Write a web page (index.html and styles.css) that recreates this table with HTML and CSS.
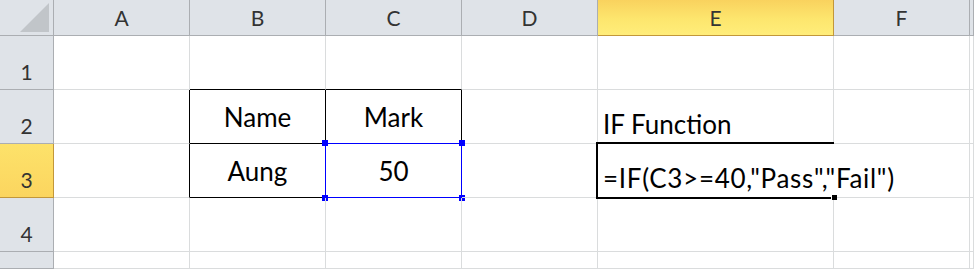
FILE: index.html
```html
<!DOCTYPE html>
<html lang="en">
<head>
<meta charset="utf-8">
<title>IF Function</title>
<link rel="stylesheet" href="styles.css">
</head>
<body>
<div class="sheet">
  <!-- column headers -->
  <div class="hd corner"><span class="corner-tri"></span></div>
  <div class="hd col">A</div>
  <div class="hd col">B</div>
  <div class="hd col">C</div>
  <div class="hd col">D</div>
  <div class="hd col active">E</div>
  <div class="hd col">F</div>
  <div class="hd col"></div>

  <!-- row 1 -->
  <div class="hd row">1</div>
  <div class="cell"></div>
  <div class="cell b-bottom"></div>
  <div class="cell b-bottom"></div>
  <div class="cell"></div>
  <div class="cell"></div>
  <div class="cell"></div>
  <div class="cell"></div>

  <!-- row 2 -->
  <div class="hd row">2</div>
  <div class="cell b-right"></div>
  <div class="cell center b-right b-bottom">Name</div>
  <div class="cell center b-right b-bottom">Mark</div>
  <div class="cell"></div>
  <div class="cell text">IF Function</div>
  <div class="cell"></div>
  <div class="cell"></div>

  <!-- row 3 -->
  <div class="hd row active">3</div>
  <div class="cell b-right"></div>
  <div class="cell center b-right b-bottom">Aung</div>
  <div class="cell center b-right b-bottom ref">50<span class="ref-box"><i class="h tl"></i><i class="h tr"></i><i class="h bl"></i><i class="h br"></i></span></div>
  <div class="cell"></div>
  <div class="cell text editing"><span class="formula">=IF(C3&gt;=40,"Pass","Fail")</span><span class="cursor-box"></span><span class="fill-handle"></span></div>
  <div class="cell"></div>
  <div class="cell"></div>

  <!-- row 4 -->
  <div class="hd row">4</div>
  <div class="cell"></div>
  <div class="cell"></div>
  <div class="cell"></div>
  <div class="cell"></div>
  <div class="cell"></div>
  <div class="cell"></div>
  <div class="cell"></div>

  <!-- row 5 -->
  <div class="hd row"></div>
  <div class="cell"></div>
  <div class="cell"></div>
  <div class="cell"></div>
  <div class="cell"></div>
  <div class="cell"></div>
  <div class="cell"></div>
  <div class="cell"></div>
</div>
</body>
</html>
```

FILE: styles.css
```css
html, body {
  margin: 0;
  padding: 0;
  background: #ffffff;
}

body {
  width: 974px;
  height: 269px;
  overflow: hidden;
  font-family: Lato, "Liberation Sans", sans-serif;
}

.sheet {
  display: grid;
  grid-template-columns: 54px 136px 136px 136px 136px 236px 136px 1fr;
  grid-template-rows: 36px 54px 54px 54px 54px 1fr;
  width: 974px;
  height: 269px;
}

/* headers */
.hd {
  box-sizing: border-box;
  background: #dfe3e8;
  border-right: 1px solid #abaeb2;
  border-bottom: 1px solid #abaeb2;
  color: #333;
  font-size: 21px;
  display: flex;
  justify-content: center;
}

.hd.col {
  align-items: center;
}

.hd.row {
  align-items: flex-end;
  padding-bottom: 5px;
}

.hd.active {
  background: linear-gradient(to bottom, #f9d25e 0%, #fde66e 55%, #ffed7a 100%);
  border-color: #c2973a;
}

.hd.row.active {
  background: linear-gradient(to bottom, #fde26a 0%, #fbd55f 100%);
}

.corner {
  position: relative;
}

.corner-tri {
  position: absolute;
  right: 4px;
  bottom: 3px;
  width: 0;
  height: 0;
  border-left: 29px solid transparent;
  border-bottom: 29px solid #c1c5c9;
}

/* cells */
.cell {
  box-sizing: border-box;
  border-right: 1px solid #dadcdd;
  border-bottom: 1px solid #dadcdd;
  color: #000;
  font-size: 26px;
  white-space: nowrap;
  position: relative;
}

.cell.b-right {
  border-right-color: #000;
}

.cell.b-bottom {
  border-bottom-color: #000;
}

.cell.center {
  display: flex;
  align-items: center;
  justify-content: center;
  padding-top: 1px;
}

.cell.text {
  display: flex;
  align-items: flex-end;
  padding-left: 5px;
  padding-bottom: 3px;
  overflow: visible;
}

.cell.editing {
  border-right-color: transparent;
  z-index: 2;
}

.formula {
  letter-spacing: 0.7px;
}

/* referenced range outline */
.ref-box {
  position: absolute;
  left: -1px;
  top: -1px;
  right: -1px;
  bottom: -1px;
  border: 1px solid #0000ff;
}

.h {
  position: absolute;
  width: 6px;
  height: 6px;
  background: #0000ff;
}

.h.tl { left: -4px; top: -4px; }
.h.tr { right: -4px; top: -4px; }
.h.bl { left: -4px; bottom: -4px; }
.h.br { right: -4px; bottom: -4px; }

/* active cell outline */
.cursor-box {
  position: absolute;
  left: -2px;
  top: -2px;
  right: -1px;
  bottom: -2px;
  border: 2px solid #000;
  border-right: none;
}

.fill-handle {
  position: absolute;
  right: -4px;
  bottom: -3px;
  width: 5px;
  height: 5px;
  background: #000;
  border-left: 1px solid #fff;
}
```
